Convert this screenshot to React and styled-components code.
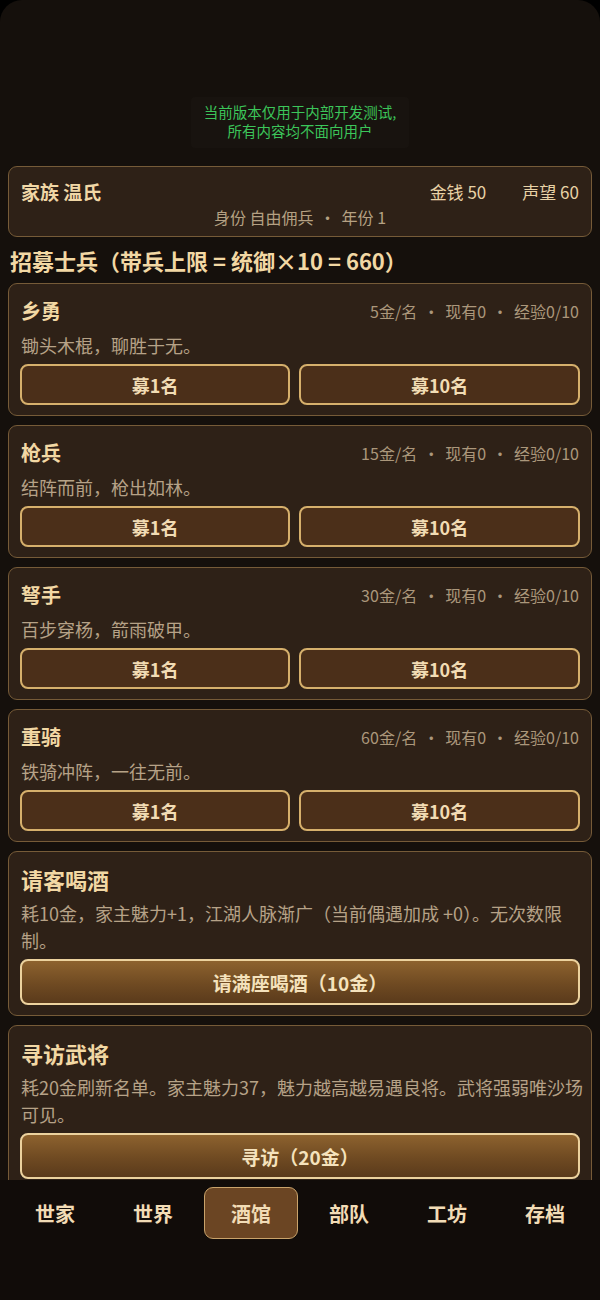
import React from "react";
import styled, { createGlobalStyle, css } from "styled-components";

const GlobalStyle = createGlobalStyle`
  html, body { margin: 0; padding: 0; background: #000; }
  body { font-family: "Noto Sans CJK SC", "Noto Sans", sans-serif; }
  * { box-sizing: border-box; }
`;

const Screen = styled.div`
  width: 600px;
  height: 1300px;
  background: #15100c;
  border-radius: 22px 22px 0 0;
  display: flex;
  flex-direction: column;
  overflow: hidden;
`;

const TopArea = styled.div`
  height: 166px;
  flex: none;
  display: flex;
  justify-content: center;
  padding-top: 97px;
`;

const Notice = styled.div`
  align-self: flex-start;
  padding: 6px 13px 8px;
  background: rgba(255, 255, 255, 0.015);
  border-radius: 4px;
  color: #3cc55a;
  font-size: 14.5px;
  line-height: 18.5px;
  text-align: center;
`;

const Main = styled.main`
  flex: 1;
  min-height: 0;
  overflow: hidden;
  padding: 0 8px;
  display: flex;
  flex-direction: column;
  gap: 9px;
`;

const Panel = styled.section`
  flex: none;
  background: #2e2117;
  border: 1px solid #765b38;
  border-radius: 9px;
`;

const HeaderCard = styled(Panel)`
  padding: 10px 12px 7px;
`;

const HeaderRow = styled.div`
  display: flex;
  justify-content: space-between;
  align-items: center;
  height: 28px;
`;

const FamilyName = styled.div`
  font-size: 19px;
  font-weight: 700;
  color: #f0d7a6;
`;

const Stats = styled.div`
  display: flex;
  gap: 36px;
  font-size: 17px;
  color: #e8d2a6;
`;

const SubLine = styled.div`
  text-align: center;
  font-size: 16px;
  line-height: 24px;
  color: #b5a183;
`;

const SectionTitle = styled.h2`
  margin: 0;
  padding-left: 2px;
  font-size: 22px;
  line-height: 28px;
  font-weight: 700;
  color: #f2d8a4;
`;

const Card = styled(Panel)`
  padding: 14px 11px 10px;
  display: flex;
  flex-direction: column;
`;

const CardHead = styled.div`
  display: flex;
  justify-content: space-between;
  align-items: center;
  line-height: ${(p) => (p.$action ? "27px" : "26px")};
  padding: 0 1px;
`;

const CardTitle = styled.h3`
  margin: 0;
  font-size: ${(p) => (p.$action ? "22px" : "20px")};
  font-weight: 700;
  color: #f2d8a4;
`;

const Meta = styled.div`
  font-size: 16px;
  color: #ab977b;
`;

const Dot = styled.span`
  margin: 0 6px;
`;

const Desc = styled.p`
  margin: ${(p) => (p.$action ? "7px -5px 0 0" : "8px 0 0")};
  padding: 0 0 0 1px;
  font-size: 18px;
  line-height: ${(p) => (p.$action ? "27px" : "26px")};
  color: #b6a287;
`;

const ButtonRow = styled.div`
  display: flex;
  gap: 9px;
  margin-top: 6px;
`;

const Button = styled.button`
  font-family: inherit;
  font-weight: 700;
  cursor: pointer;
  border-radius: 8px;
  ${(p) =>
    p.$wide
      ? css`
          height: 46px;
          margin-top: 5px;
          font-size: 19px;
          color: #f5e2bc;
          border: 2px solid #ecd29e;
          background: linear-gradient(180deg, #8d622e 0%, #6f4a22 55%, #5a3a1b 100%);
        `
      : css`
          flex: 1 1 auto;
          height: 41px;
          font-size: 18px;
          color: #f2dcb4;
          border: 2px solid #d6b06c;
          background: #4b2f19;
        `}
`;

const Nav = styled.nav`
  height: 120px;
  flex: none;
  background: #110c09;
  display: grid;
  grid-template-columns: repeat(6, 1fr);
  padding: 7px 6px 0;
  align-items: start;
`;

const NavItem = styled.button`
  height: 52px;
  margin: 0 2px;
  font-family: inherit;
  font-size: 20px;
  font-weight: 700;
  color: #f2dcb6;
  border-radius: 9px;
  border: 1.5px solid ${(p) => (p.$active ? "#c9a36b" : "transparent")};
  background: ${(p) => (p.$active ? "#6b4523" : "transparent")};
`;

const units = [
  { name: "乡勇", price: 5, desc: "锄头木棍，聊胜于无。" },
  { name: "枪兵", price: 15, desc: "结阵而前，枪出如林。" },
  { name: "弩手", price: 30, desc: "百步穿杨，箭雨破甲。" },
  { name: "重骑", price: 60, desc: "铁骑冲阵，一往无前。" },
];

const actions = [
  {
    title: "请客喝酒",
    desc: "耗10金，家主魅力+1，江湖人脉渐广（当前偶遇加成 +0）。无次数限制。",
    button: "请满座喝酒（10金）",
  },
  {
    title: "寻访武将",
    desc: "耗20金刷新名单。家主魅力37，魅力越高越易遇良将。武将强弱唯沙场可见。",
    button: "寻访（20金）",
  },
];

const tabs = ["世家", "世界", "酒馆", "部队", "工坊", "存档"];

export default function App() {
  return (
    <>
      <GlobalStyle />
      <Screen>
        <TopArea>
          <Notice>
            当前版本仅用于内部开发测试,
            <br />
            所有内容均不面向用户
          </Notice>
        </TopArea>
        <Main>
          <HeaderCard>
            <HeaderRow>
              <FamilyName>家族 温氏</FamilyName>
              <Stats>
                <span>金钱 50</span>
                <span>声望 60</span>
              </Stats>
            </HeaderRow>
            <SubLine>
              身份 自由佣兵<Dot>·</Dot>年份 1
            </SubLine>
          </HeaderCard>
          <SectionTitle>招募士兵（带兵上限 = 统御×10 = 660）</SectionTitle>
          {units.map((u) => (
            <Card key={u.name}>
              <CardHead>
                <CardTitle>{u.name}</CardTitle>
                <Meta>
                  {u.price}金/名<Dot>·</Dot>现有0<Dot>·</Dot>经验0/10
                </Meta>
              </CardHead>
              <Desc>{u.desc}</Desc>
              <ButtonRow>
                <Button>募1名</Button>
                <Button>募10名</Button>
              </ButtonRow>
            </Card>
          ))}
          {actions.map((a) => (
            <Card key={a.title}>
              <CardHead $action>
                <CardTitle $action>{a.title}</CardTitle>
              </CardHead>
              <Desc $action>{a.desc}</Desc>
              <Button $wide>{a.button}</Button>
            </Card>
          ))}
        </Main>
        <Nav>
          {tabs.map((t) => (
            <NavItem key={t} $active={t === "酒馆"}>
              {t}
            </NavItem>
          ))}
        </Nav>
      </Screen>
    </>
  );
}
